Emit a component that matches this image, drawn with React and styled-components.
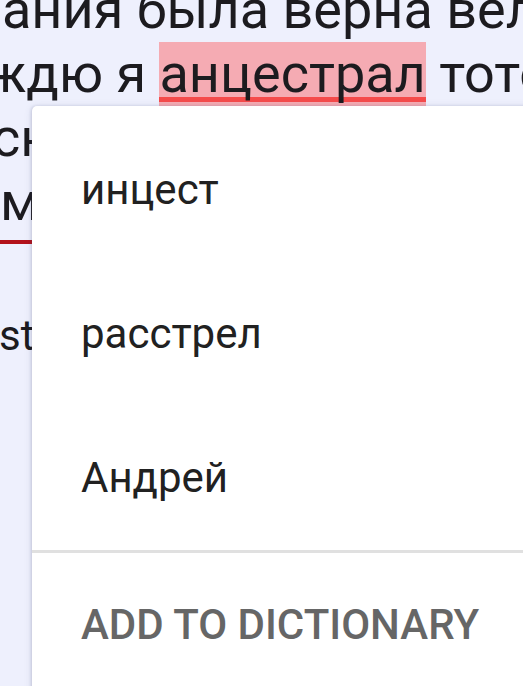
import React from 'react';
import styled, { createGlobalStyle } from 'styled-components';

const GlobalStyle = createGlobalStyle`
  html, body {
    margin: 0;
    padding: 0;
    background: #eef0fd;
    overflow: hidden;
  }
`;

const suggestions = ['инцест', 'расстрел', 'Андрей'];

export default function App() {
  return (
    <>
      <GlobalStyle />
      <Screen>
        <Editor>
          <Line $shift={2}>ания была верна великой</Line>
          <Line $shift={-15}>
            ждю я <Misspelled>анцестрал</Misspelled> тоточно
          </Line>
          <Line $shift={-8}>сновa</Line>
          <Line $shift={0}>может</Line>
        </Editor>
        <FieldLine />
        <Hint>stop</Hint>

        <Popup>
          <Items>
            {suggestions.map((s) => (
              <Item key={s}>{s}</Item>
            ))}
          </Items>
          <Divider />
          <Action>ADD TO DICTIONARY</Action>
        </Popup>
      </Screen>
    </>
  );
}

const Screen = styled.div`
  position: relative;
  width: 523px;
  height: 686px;
  overflow: hidden;
  background: #eef0fd;
  font-family: Roboto, 'Noto Sans', sans-serif;
`;

const Editor = styled.div`
  margin-top: -22px;
  font-size: 54px;
  line-height: 64px;
  color: #1c1b1f;
`;

const Line = styled.div`
  white-space: nowrap;
  margin-left: ${(p) => p.$shift}px;
`;

const Misspelled = styled.span`
  display: inline-block;
  height: 64px;
  vertical-align: top;
  background: linear-gradient(
      to bottom,
      transparent 55px,
      #f54b4b 55px,
      #f54b4b 60px,
      transparent 60px
    ),
    #f5abb3;
`;

const FieldLine = styled.div`
  margin-top: 6px;
  height: 4px;
  width: 60px;
  background: #b3121b;
`;

const Hint = styled.div`
  margin-top: 72px;
  margin-left: -1px;
  font-size: 42px;
  line-height: 40px;
  color: #1c1b1f;
  white-space: nowrap;
`;

const Popup = styled.div`
  position: absolute;
  left: 32px;
  top: 106px;
  right: -20px;
  bottom: -20px;
  background: #ffffff;
  border-radius: 5px;
  box-shadow: -1px 0 3px rgba(60, 64, 110, 0.18), 0 1px 8px rgba(60, 64, 110, 0.12);
  padding-top: 12px;
`;

const Items = styled.div`
  display: flex;
  flex-direction: column;
`;

const Item = styled.div`
  height: 144px;
  line-height: 144px;
  padding-left: 49px;
  font-size: 42px;
  color: #212121;
  white-space: nowrap;
`;

const Divider = styled.div`
  height: 3px;
  background: #e0e0e0;
`;

const Action = styled.div`
  height: 144px;
  line-height: 144px;
  padding-left: 49px;
  font-size: 42px;
  font-weight: 500;
  color: #666666;
  white-space: nowrap;
`;
